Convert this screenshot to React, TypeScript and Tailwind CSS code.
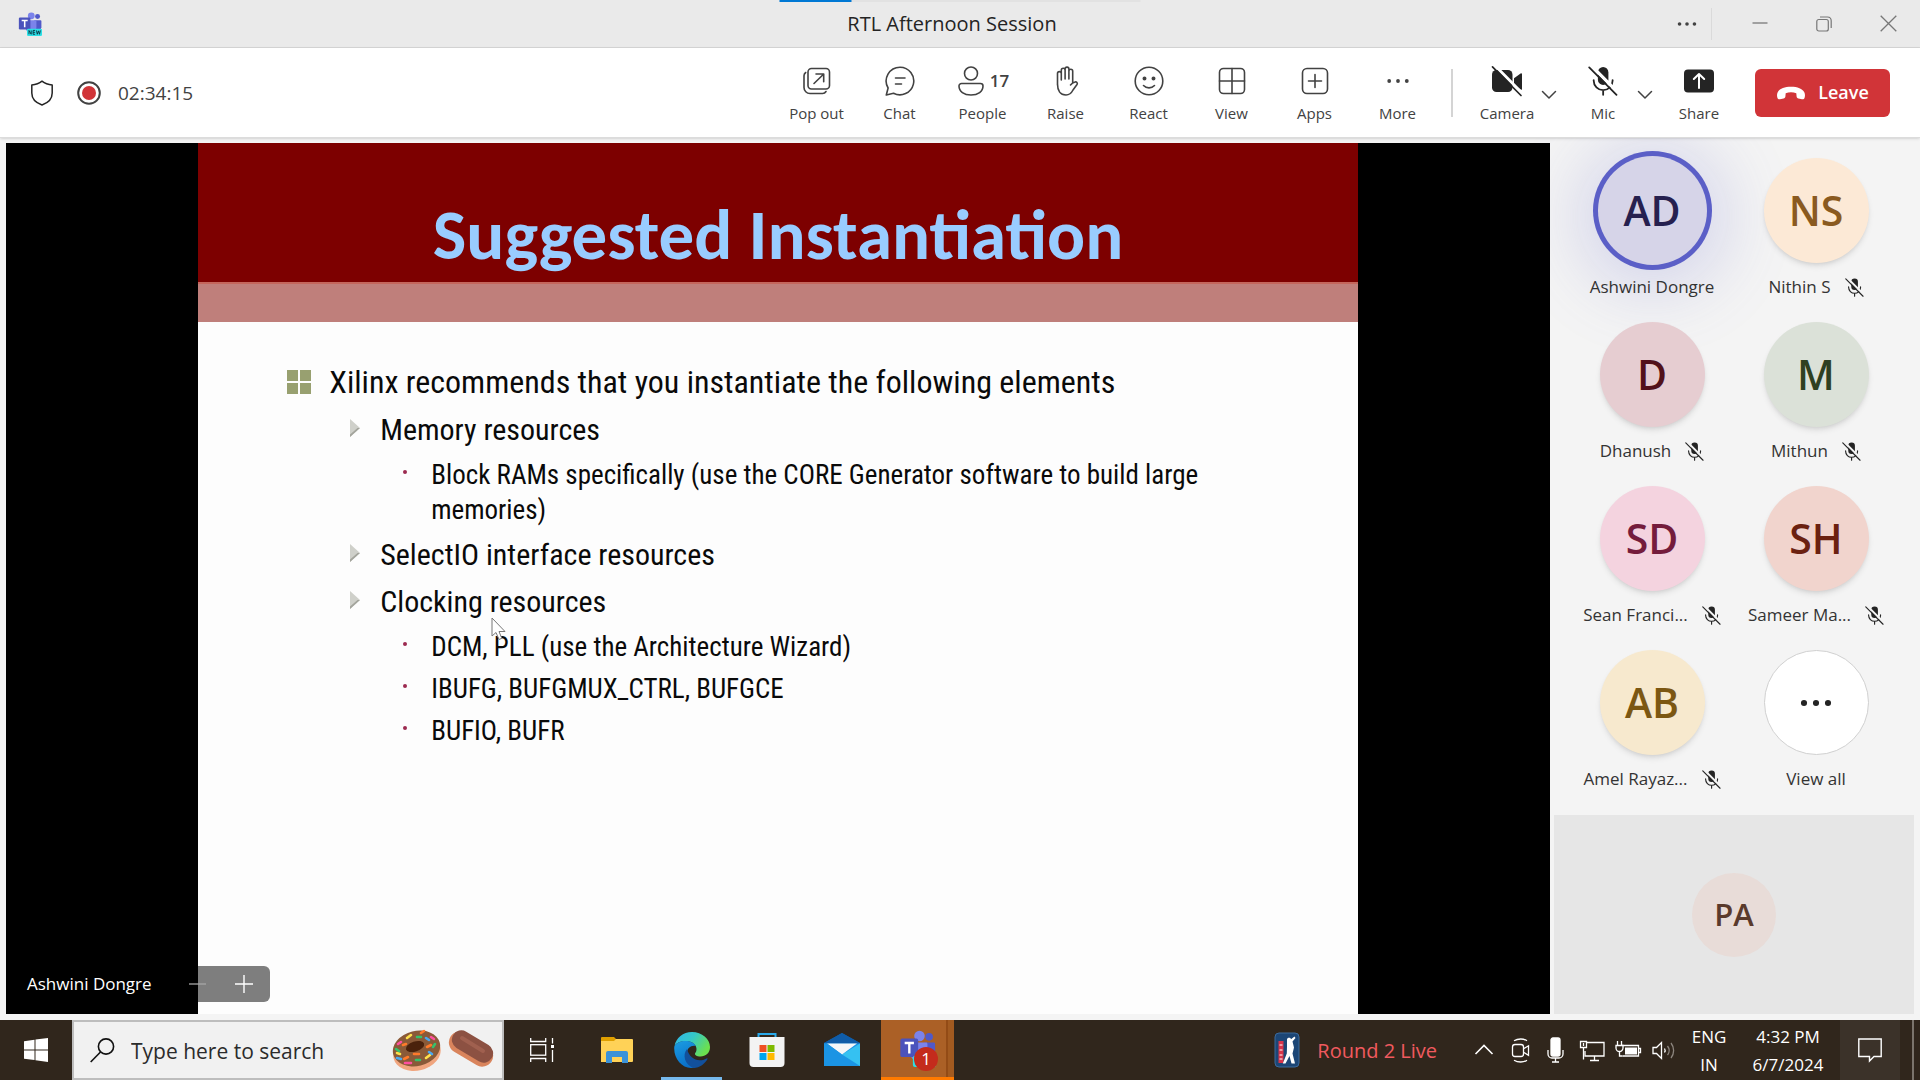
import type { ReactNode } from 'react';

const ink = '#424242';

function Stroke({ children, size = 30, w = 1.6 }: { children: ReactNode; size?: number; w?: number }) {
  return (
    <svg
      width={size}
      height={size}
      viewBox="0 0 30 30"
      fill="none"
      stroke={ink}
      strokeWidth={w}
      strokeLinecap="round"
      strokeLinejoin="round"
      aria-hidden="true"
    >
      {children}
    </svg>
  );
}

function Dots({ size = 30, r = 2, gap = 8.5, color = ink }: { size?: number; r?: number; gap?: number; color?: string }) {
  return (
    <svg width={size} height={size} viewBox="0 0 30 30" fill={color} aria-hidden="true">
      <circle cx={15 - gap} cy="15" r={r} />
      <circle cx="15" cy="15" r={r} />
      <circle cx={15 + gap} cy="15" r={r} />
    </svg>
  );
}

function MicOff({ size, bg }: { size: number; bg: string }) {
  return (
    <svg width={size} height={size} viewBox="0 0 20 20" fill="none" strokeLinecap="round" aria-hidden="true">
      <rect x="6.6" y="0.6" width="7" height="12" rx="3.5" fill="#242424" />
      <path d="M3.8 9.4v.4a6.3 6.3 0 0 0 12.6 0v-.4M10.1 16.2v3" stroke="#242424" strokeWidth="1.2" />
      <path d="M2 -.4 20.5 18.2" stroke={bg} strokeWidth="2.2" />
      <path d="M.8 .9 19 19.2" stroke="#242424" strokeWidth="1.2" />
    </svg>
  );
}

function CameraOff() {
  return (
    <svg width="32" height="32" viewBox="0 0 32 32" fill="none" strokeLinecap="round" aria-hidden="true">
      <rect x="1" y="5" width="20.500" height="22" rx="4.500" fill="#242424" />
      <path d="M23 13.200 29.600 8.400c.7-.5 1.400-.1 1.400.7v14.800c0 .8-.7 1.200-1.400.7L23 19.800z" fill="#242424" />
      <path d="M3.500 0 32.500 29.500" stroke="#fff" strokeWidth="2.800" />
      <path d="M1.500 1.800 30 30.500" stroke="#242424" strokeWidth="1.700" />
    </svg>
  );
}

function ChevronDown() {
  return (
    <svg width="16" height="10" viewBox="0 0 16 10" fill="none" stroke={ink} strokeWidth="1.500" strokeLinecap="round" strokeLinejoin="round" aria-hidden="true">
      <path d="M1.500 1.500 8 8l6.500-6.500" />
    </svg>
  );
}

function TeamsLogo({ size, badge = true }: { size: number; badge?: boolean }) {
  return (
    <svg width={size} height={size} viewBox="0 0 28 28" aria-hidden="true">
      <circle cx="15.500" cy="4.500" r="4" fill="#7b83eb" />
      <circle cx="22.800" cy="5.200" r="2.900" fill="#5059c9" />
      <path d="M19 9.500h7.300c.6 0 1 .5 1 1v7.200a4.800 4.800 0 0 1-8.300 3z" fill="#5059c9" />
      <path d="M9 9.500h11.500c.6 0 1 .5 1 1V18a6.500 6.500 0 0 1-12.800 1z" fill="#7b83eb" />
      <rect x="1" y="6.500" width="13.500" height="14" rx="1.400" fill="#4b53bc" />
      <path d="M4.300 9.800h7M7.800 9.800v8" stroke="#fff" strokeWidth="1.800" />
      {badge && (
        <>
          <rect x="10.500" y="19.500" width="17.500" height="8.500" rx="1.600" fill="#2be0e6" />
          <path d="M12.800 26v-4.500l2.600 4.500v-4.500M20 21.500h-2.400V26H20M17.600 23.700H20M21.500 21.500l1 4.500 1.300-4 1.300 4 1-4.500" stroke="#0b2a3a" strokeWidth="1" fill="none" />
        </>
      )}
    </svg>
  );
}

const tools: { label: string; icon: ReactNode; count?: string }[] = [
  {
    label: 'Pop out',
    icon: (
      <Stroke>
        <rect x="6" y="2.500" width="21.500" height="20.500" rx="3.500" />
        <path d="M3.700 6.500A4 4 0 0 0 2 9.800v11.700a6 6 0 0 0 6 6h12.500a4 4 0 0 0 3.500-2M12 17.500l9.500-9.300M14 8h7.700v7.700" />
      </Stroke>
    ),
  },
  {
    label: 'Chat',
    icon: (
      <Stroke>
        <path d="M15 1.200a13.800 13.800 0 1 1-6.500 26L1.300 29l1.800-7A13.800 13.800 0 0 1 15 1.200zM10.500 12h9.500M10.500 18h6" />
      </Stroke>
    ),
  },
  {
    label: 'People',
    count: '17',
    icon: (
      <Stroke>
        <circle cx="15" cy="7.500" r="6.500" />
        <path d="M5.500 17.500h19a2.500 2.500 0 0 1 2.500 2.500c0 5.500-5 9-12 9s-12-3.500-12-9a2.500 2.500 0 0 1 2.500-2.500z" />
      </Stroke>
    ),
  },
  {
    label: 'Raise',
    icon: (
      <Stroke>
        <path d="M6.500 19V7.500a1.900 1.900 0 0 1 3.800 0V14M10.300 13V4.200a1.900 1.900 0 0 1 3.800 0V13M14.100 12V3a1.900 1.900 0 0 1 3.800 0v10M17.900 13V5.200a1.900 1.900 0 0 1 3.800 0V17M6.500 18c0 6 2.500 11 8.500 11 3.500 0 5.500-2 7-5l4-5.500c1-1.500-.5-3-2-2.500-1.300.4-2.800 1-4.500 3" />
      </Stroke>
    ),
  },
  {
    label: 'React',
    icon: (
      <Stroke>
        <circle cx="15" cy="15" r="13.800" />
        <circle cx="10.500" cy="12.500" r="1.200" fill={ink} />
        <circle cx="19.500" cy="12.500" r="1.200" fill={ink} />
        <path d="M9.500 19.500a7.500 7.500 0 0 0 11 0" />
      </Stroke>
    ),
  },
  {
    label: 'View',
    icon: (
      <Stroke>
        <rect x="2.500" y="2.500" width="25" height="25" rx="4" />
        <path d="M15 2.500v25M2.500 15h25" />
      </Stroke>
    ),
  },
  {
    label: 'Apps',
    icon: (
      <Stroke>
        <rect x="2.500" y="2.500" width="25" height="25" rx="4.500" />
        <path d="M15 8.500v13M8.500 15h13" />
      </Stroke>
    ),
  },
  { label: 'More', icon: <Dots r={1.9} gap={8.8} /> },
];

function TitleBar() {
  return (
    <header className="relative grid h-12 grid-cols-[1fr_auto_1fr] items-center border-b border-[#d6d6d6] bg-[#eaeaea]">
      <div className="absolute top-0 left-1/2 h-0.5 w-[361px] -translate-x-1/2 bg-[#e2e2e2]">
        <div className="h-full w-1/5 bg-[#0078d4]" />
      </div>
      <div className="pl-[18px]">
        <TeamsLogo size={24} />
      </div>
      <h1 className="pr-4 text-[20px] leading-6 text-[#242424]">RTL Afternoon Session</h1>
      <div className="flex items-center justify-end">
        <button aria-label="Options" className="flex w-12 justify-center">
          <Dots size={26} r={2.1} gap={8.6} />
        </button>
        <div className="mr-4 h-8 w-px bg-[#dadada]" />
        <button aria-label="Minimise" className="flex w-16 justify-center">
          <svg width="16" height="16" viewBox="0 0 16 16" stroke="#777" strokeWidth="1.300">
            <path d="M.5 7H15.500" />
          </svg>
        </button>
        <button aria-label="Restore" className="flex w-16 justify-center">
          <svg width="16" height="16" viewBox="0 0 16 16" fill="none" stroke="#777" strokeWidth="1.200">
            <rect x=".8" y="3.500" width="11.500" height="11.500" rx="2" />
            <path d="M4 1h7.500A3.800 3.800 0 0 1 15.200 4.700V12" />
          </svg>
        </button>
        <button aria-label="Close" className="flex w-16 justify-center">
          <svg width="17" height="17" viewBox="0 0 17 17" stroke="#777" strokeWidth="1.300">
            <path d="M.7.7l15.600 15.600M16.300.7.700 16.300" />
          </svg>
        </button>
      </div>
    </header>
  );
}

function ToolLabel({ children }: { children: ReactNode }) {
  return <span className="text-[15px] leading-5">{children}</span>;
}

function Toolbar() {
  return (
    <div className="relative z-10 flex h-[90px] items-center justify-between border-b border-[#dcdcdc] bg-white px-[30px] text-[#424242] shadow-sm">
      <div className="flex items-center">
        <svg width="24" height="26" viewBox="0 0 24 26" fill="none" stroke="#242424" strokeWidth="1.500" strokeLinejoin="round" role="img" aria-label="Encrypted">
          <path d="M12 1.200c2.800 2.300 6 3.500 10.200 3.800v8c0 5.600-3.400 9.600-10.200 12C5.200 22.600 1.800 18.600 1.800 13V5C6 4.700 9.200 3.500 12 1.200z" />
        </svg>
        <svg className="ml-[23px]" width="24" height="24" viewBox="0 0 24 24" role="img" aria-label="Recording">
          <circle cx="12" cy="12" r="10.800" fill="#fff" stroke="#424242" strokeWidth="2" />
          <circle cx="12" cy="12" r="7" fill="#d13438" />
        </svg>
        <time className="ml-[17px] text-[19px] leading-6">02:34:15</time>
      </div>
      <div className="flex items-center">
        {tools.map((t) => (
          <button key={t.label} className="flex w-[83px] flex-col items-center gap-1.5 pt-0.5">
            <span className="flex h-8 items-center gap-1">
              {t.icon}
              {t.count && <span className="text-[17px] leading-5 font-semibold">{t.count}</span>}
            </span>
            <ToolLabel>{t.label}</ToolLabel>
          </button>
        ))}
        <div className="mr-6 ml-3 h-12 w-0.5 bg-[#d4d4d4]" />
        <button className="flex w-[60px] flex-col items-center gap-1.5 pt-0.5">
          <CameraOff />
          <ToolLabel>Camera</ToolLabel>
        </button>
        <button aria-label="Camera options" className="flex w-6 justify-center pt-1">
          <ChevronDown />
        </button>
        <button className="ml-3 flex w-[60px] flex-col items-center gap-1.5 pt-0.5">
          <span className="flex h-8 items-center">
            <MicOff size={30} bg="#fff" />
          </span>
          <ToolLabel>Mic</ToolLabel>
        </button>
        <button aria-label="Mic options" className="flex w-6 justify-center pt-1">
          <ChevronDown />
        </button>
        <button className="flex w-[84px] flex-col items-center gap-1.5 pt-0.5">
          <svg width="32" height="32" viewBox="0 0 32 32" fill="none" aria-hidden="true">
            <rect x="1" y="4.500" width="30" height="23" rx="4" fill="#242424" />
            <path d="M16 23V9.500M10.800 14 16 9l5.200 5" stroke="#fff" strokeWidth="2" strokeLinecap="round" strokeLinejoin="round" />
          </svg>
          <ToolLabel>Share</ToolLabel>
        </button>
        <button className="ml-3.5 flex h-12 w-[135px] items-center justify-center gap-3 rounded-md bg-[#d13438] text-[18px] font-semibold text-white">
          <svg width="30" height="14" viewBox="0 0 30 14" fill="#fff" aria-hidden="true">
            <path d="M15 .7c6.500 0 11.500 2 13.300 5.500.9 1.800.8 3.800.3 5.500-.4 1.200-1.400 1.800-2.600 1.500l-3.600-.8c-1-.2-1.700-1-1.800-2l-.3-3.200C18.600 6.600 16.900 6.300 15 6.300s-3.600.3-5.300.9L9.400 10.400c-.1 1-.8 1.800-1.800 2l-3.600.8c-1.200.3-2.200-.3-2.600-1.500-.5-1.700-.6-3.700.3-5.500C3.500 2.700 8.500.7 15 .7z" />
          </svg>
          Leave
        </button>
      </div>
    </div>
  );
}

function ArrowItem({ children }: { children: ReactNode }) {
  return (
    <div className="flex text-[30px] leading-10">
      <svg className="mt-2 mr-5 shrink-0" width="10" height="20" viewBox="0 0 10 20" aria-hidden="true">
        <path d="M0 1 10 10 0 19z" fill="#cfd0ca" />
        <path d="M10 10 0 19v-2.500L7.500 10z" fill="#a3a49c" />
      </svg>
      <p>{children}</p>
    </div>
  );
}

function DotItem({ children }: { children: ReactNode }) {
  return (
    <li className="flex text-[27px] leading-[35px]">
      <span className="mt-3 mr-6 ml-px size-1 shrink-0 rounded-full bg-[#9c2a50]" />
      <p>{children}</p>
    </li>
  );
}

function Stage() {
  return (
    <section aria-label="Shared screen" className="relative z-10 flex flex-1 flex-col bg-black">
      <article className="mx-auto flex w-[75.1%] flex-1 flex-col bg-[#fdfdfd] text-[#0a0a0a]">
        <div className="flex h-[139px] justify-center bg-[#7d0000] pt-[52px]">
          <h2 className="font-[Carlito,Lato,sans-serif] text-[71px] leading-20 font-bold text-[#99ccff]">Suggested Instantiation</h2>
        </div>
        <div className="h-10 border-t-2 border-[#c4665c] bg-[#bf7f7b]" />
        <div className="pt-10 pr-20 pl-[89px] font-['Roboto_Condensed','Liberation_Sans',sans-serif]">
          <div className="flex items-center text-[32px] leading-10">
            <svg className="mr-[18px] shrink-0" width="24" height="24" viewBox="0 0 24 24" fill="#98a070" aria-hidden="true">
              <path d="M0 0h11v11H0zM13 0h11v11H13zM0 13h11v11H0zM13 13h11v11H13z" />
            </svg>
            <p>Xilinx recommends that you instantiate the following elements</p>
          </div>
          <ul className="mt-2 space-y-[7px] pl-[63px]">
            <li>
              <ArrowItem>Memory resources</ArrowItem>
              <ul className="mt-2 pl-[52px]">
                <DotItem>Block RAMs specifically (use the CORE Generator software to build large memories)</DotItem>
              </ul>
            </li>
            <li>
              <ArrowItem>SelectIO interface resources</ArrowItem>
            </li>
            <li className="relative">
              <ArrowItem>Clocking resources</ArrowItem>
              <svg className="absolute top-[35px] left-[141px]" width="16" height="24" viewBox="0 0 16 24" aria-hidden="true">
                <path d="M1 1v18l4-3.500L8 22.500l2.800-1.200L8 14.500h6z" fill="#fff" stroke="#777" strokeWidth="1" />
              </svg>
              <ul className="mt-2 space-y-[7px] pl-[52px]">
                <DotItem>DCM, PLL (use the Architecture Wizard)</DotItem>
                <DotItem>IBUFG, BUFGMUX_CTRL, BUFGCE</DotItem>
                <DotItem>BUFIO, BUFR</DotItem>
              </ul>
            </li>
          </ul>
        </div>
      </article>
      <div className="absolute bottom-3 left-0 flex h-9 w-[264px] items-center justify-between rounded-r-md bg-black/50 pr-[17px] pl-[21px] text-white">
        <span className="text-[17px] leading-6">Ashwini Dongre</span>
        <span className="flex gap-[29px]">
          <button aria-label="Zoom out">
            <svg width="17" height="18" viewBox="0 0 17 18" stroke="#a8a8a8" strokeWidth="1.300">
              <path d="M0 9h17" />
            </svg>
          </button>
          <button aria-label="Zoom in">
            <svg width="18" height="18" viewBox="0 0 18 18" stroke="#fff" strokeWidth="1.400">
              <path d="M0 9h18M9 0v18" />
            </svg>
          </button>
        </span>
      </div>
    </section>
  );
}

const people = [
  { initials: 'AD', name: 'Ashwini Dongre', tone: 'bg-[#d6d4e8] text-[#26204f] shadow-[0_0_0_2px_#d6d4e8,0_0_0_7px_#5b5fc7,0_6px_70px_20px_rgba(91,95,199,0.22)]', muted: false },
  { initials: 'NS', name: 'Nithin S', tone: 'bg-[#fce9d6] text-[#8a5a20] shadow-md', muted: true },
  { initials: 'D', name: 'Dhanush', tone: 'bg-[#e6cdd1] text-[#52111a] shadow-md', muted: true },
  { initials: 'M', name: 'Mithun', tone: 'bg-[#dbe1d8] text-[#2f4021] shadow-md', muted: true },
  { initials: 'SD', name: 'Sean Franci...', tone: 'bg-[#f4d3df] text-[#741c3c] shadow-md', muted: true },
  { initials: 'SH', name: 'Sameer Ma...', tone: 'bg-[#f1d4cd] text-[#6b2110] shadow-md', muted: true },
  { initials: 'AB', name: 'Amel Rayaz...', tone: 'bg-[#f7e9ce] text-[#7c5712] shadow-md', muted: true },
];

function Roster() {
  return (
    <aside aria-label="Participants" className="flex w-[360px] shrink-0 flex-col justify-between">
      <ul className="grid grid-cols-2 gap-y-[23px] px-4 pt-[15px]">
        {people.map((p) => (
          <li key={p.name} className="flex flex-col items-center gap-3">
            <div className={`flex size-[105px] items-center justify-center rounded-full text-[41px] font-semibold ${p.tone}`}>{p.initials}</div>
            <div className="flex items-center gap-3.5 text-[17px] leading-6 whitespace-nowrap text-[#333]">
              {p.name}
              {p.muted && <MicOff size={19} bg="#f4f4f4" />}
            </div>
          </li>
        ))}
        <li>
          <button className="flex w-full flex-col items-center gap-3">
            <span className="flex size-[105px] items-center justify-center rounded-full border border-[#d0d0d0] bg-white">
              <Dots size={40} r={2.3} gap={9} color="#242424" />
            </span>
            <span className="text-[17px] leading-6 text-[#333]">View all</span>
          </button>
        </li>
      </ul>
      <div className="flex h-[199px] items-center justify-center bg-[#e6e6e6]">
        <div className="flex size-21 items-center justify-center rounded-full bg-[#e8dcd8] text-[31px] font-semibold text-[#5a3a2c]">PA</div>
      </div>
    </aside>
  );
}

function SearchArt() {
  return (
    <svg className="shrink-0" width="104" height="44" viewBox="0 0 104 44" fill="none" aria-hidden="true">
      <ellipse cx="25" cy="25" rx="24" ry="17.500" fill="#f0a57e" transform="rotate(-14 25 25)" />
      <ellipse cx="24.500" cy="20.500" rx="24" ry="17.500" fill="#8a5a38" transform="rotate(-14 24.500 20.500)" />
      <ellipse cx="23" cy="18.500" rx="9.500" ry="5" fill="#4a220c" transform="rotate(-18 23 18.500)" />
      <g strokeWidth="2.600" strokeLinecap="round">
        <path d="M15 10l4-3M34 30l4-3M5 25l3 1" stroke="#ffe14a" />
        <path d="M6 16l3-2M13 35l6 0M39 9l3 2" stroke="#ff4fa0" />
        <path d="M25 9l4 0M41 19l2-3M4 21l3 2M24 32l4 0" stroke="#35c26b" />
        <path d="M5 30l4 1M34 10l3 2M37 24l3 2" stroke="#4aa8f0" />
        <path d="M11 17l3-1M29 5l3-2M35 19l4-2M22 26l5 0M12 31l4-2" stroke="#ff7a2a" />
      </g>
      <rect x="55" y="10" width="48" height="22" rx="11" fill="#d9845c" transform="rotate(31 79 21)" />
      <rect x="58" y="9" width="45" height="19" rx="9.500" fill="#8c5142" transform="rotate(31 80.500 18.500)" />
      <path d="M70 10l21 13" stroke="#a0604f" strokeWidth="4" strokeLinecap="round" />
    </svg>
  );
}

const apps = [
  {
    name: 'Task View',
    icon: (
      <svg width="24" height="24" viewBox="0 0 24 24" fill="none" stroke="#fff" strokeWidth="1.300">
        <path d="M.7 0v3.500h15V0M.7 24v-3.500h15V24M22.500 0v5.500M22.500 12v12" />
        <rect x=".7" y="6.700" width="15" height="10.500" />
        <path d="M21 7h3v3h-3z" fill="#fff" stroke="none" />
      </svg>
    ),
  },
  {
    name: 'File Explorer',
    icon: (
      <svg width="32" height="28" viewBox="0 0 32 28">
        <path d="M0 2a1 1 0 0 1 1-1h12l2 2v5H0z" fill="#e0a000" />
        <path d="M0 5h13l2-2h16a1 1 0 0 1 1 1v21a1 1 0 0 1-1 1H0z" fill="#ffd257" />
        <path d="M5 27V17a2 2 0 0 1 2-2h18a2 2 0 0 1 2 2v10h-6v-6H11v6z" fill="#3b92d8" />
      </svg>
    ),
  },
  {
    name: 'Edge',
    active: 'before:bg-[#76b9ed]',
    icon: (
      <svg width="36" height="36" viewBox="0 0 36 36">
        <defs>
          <linearGradient id="edge-top" x1="0" y1="0" x2="1" y2=".5">
            <stop offset="0" stopColor="#2fb4ea" />
            <stop offset=".5" stopColor="#35c8c8" />
            <stop offset="1" stopColor="#6be04f" />
          </linearGradient>
          <linearGradient id="edge-side" x1="0" y1="0" x2=".4" y2="1">
            <stop offset="0" stopColor="#1b9de2" />
            <stop offset="1" stopColor="#0a6fc8" />
          </linearGradient>
        </defs>
        <path d="M.5 14C2 6 9 0 18 0c10 0 18 7 18 15 0 6-4.500 9.500-9.500 9.500-4 0-6-1.500-5.500-3 .8-1.500 1.500-2 1.500-4.500 0-4-4-8-10.500-8S1.500 12 .5 14z" fill="url(#edge-top)" />
        <path d="M.3 14.500C2 11 6.500 9 11.500 9c5 0 9 2 10.500 5-5-1-9 2-9 7 0 7 6 12 12 12-3 2-5 3-8 3C7.500 36-.8 26 .3 14.500z" fill="url(#edge-side)" />
        <path d="M13 17c-5 6-2 16 6.500 19C26 36 31 31.500 33.500 27c.3-.7-.5-1-1-.6-8 4.500-17 .6-19.500-9.400z" fill="#12509c" />
      </svg>
    ),
  },
  {
    name: 'Microsoft Store',
    icon: (
      <svg width="36" height="36" viewBox="0 0 36 36">
        <path d="M9.500 7V2h17v5" fill="none" stroke="#29a9ea" strokeWidth="2" />
        <path d="M.5 5h35v26a4 4 0 0 1-4 4h-27a4 4 0 0 1-4-4z" fill="#f3f3f3" />
        <path d="M10.500 13h7v7h-7z" fill="#f05022" />
        <path d="M18.500 13h7v7h-7z" fill="#7fba00" />
        <path d="M10.500 21h7v7h-7z" fill="#00a4ef" />
        <path d="M18.500 21h7v7h-7z" fill="#ffb900" />
      </svg>
    ),
  },
  {
    name: 'Mail',
    icon: (
      <svg width="36" height="34" viewBox="0 0 36 34">
        <path d="M0 10 18 0l18 10v8H0z" fill="#0f5ca8" />
        <path d="M0 10.500V33h36V10.500z" fill="#1b94e4" />
        <path d="M36 10.500 18 21.500 36 33z" fill="#35c1f1" />
        <path d="M0 10h36L18 0z" fill="#0f5ca8" />
        <path d="M3 10.500h30L18 21.500z" fill="#f4f6f8" />
        <path d="M0 10.500h3l15 11-18 11.500z" fill="#1b94e4" />
      </svg>
    ),
  },
];

function Tray({ label, children }: { label: string; children: ReactNode }) {
  return (
    <button aria-label={label} className="flex h-full w-9 items-center justify-center">
      <svg width="28" height="28" viewBox="0 0 28 28" fill="none" stroke="#fff" strokeWidth="1.300">
        {children}
      </svg>
    </button>
  );
}

function Taskbar() {
  return (
    <footer className="flex h-[60px] bg-[#30261c] text-white">
      <button aria-label="Start" className="flex w-[72px] items-center justify-center">
        <svg width="24" height="24" viewBox="0 0 24 24" fill="#fff">
          <path d="M0 3.200 10.500 1.800V11.500H0zM11.500 1.600 24 0v11.500H11.500zM0 12.500h10.500v9.600L0 20.800zM11.500 12.500H24V24l-12.500-1.700z" />
        </svg>
      </button>
      <label className="flex w-[432px] items-center border-2 border-[#bdbdbd] bg-[#f1f1f1] pr-1.5 pl-4">
        <svg className="shrink-0" width="25" height="25" viewBox="0 0 25 25" fill="none" stroke="#111" strokeWidth="1.600" aria-hidden="true">
          <circle cx="16" cy="8.500" r="7.600" />
          <path d="M10.500 14 .7 24" />
        </svg>
        <input
          aria-label="Search"
          placeholder="Type here to search"
          className="ml-4 w-0 flex-1 bg-transparent pt-1 text-[21px] text-[#2b2b2b] outline-none placeholder:text-[#2b2b2b]"
        />
        <SearchArt />
      </label>
      {apps.map((a) => (
        <button
          key={a.name}
          aria-label={a.name}
          className={`relative flex w-[75px] items-center justify-center before:absolute before:bottom-0 before:h-[3px] before:w-[61px] ${a.active ?? ''}`}
        >
          {a.icon}
        </button>
      ))}
      <button aria-label="Microsoft Teams" className="relative ml-0.5 flex w-[73px] items-center justify-center border-b-[3px] border-[#ff7a00] bg-[#ab6026] shadow-[inset_-6px_0_0_#a25a20,inset_-8px_0_0_#934b16]">
        <TeamsLogo size={37} />
        <span className="absolute top-[27px] left-[33px] flex size-6 items-center justify-center rounded-full bg-[#c42b1c] text-[17px] leading-6">1</span>
      </button>
      <div className="ml-auto flex items-center">
        <button className="mr-[29px] flex items-center gap-[17px] text-[20px] text-[#f05a5f]">
          <svg width="26" height="36" viewBox="0 0 26 36" aria-hidden="true">
            <rect x="1" y="1" width="24" height="34" rx="4" fill="#1c4676" stroke="#3b6a9c" />
            <path d="M4.500 9h5v22h-5z" fill="#d8344a" />
            <path d="M5.500 13h3M5.500 18h3M5.500 23h3M5.500 27h3" stroke="#fff" strokeWidth="1" />
            <path d="M13 7.500c0-2 3.500-2.500 4-.3l3.500-2.700 1 1.500-3 3.500 1.500 6-1.500 6 2.500 10h-3.500L15.500 24l-4 7.500H8.800l4-10 .2-7z" fill="#fff" />
          </svg>
          <span className="pt-0.5">Round 2 Live</span>
        </button>
        <Tray label="Show hidden icons">
          <path d="M5.500 18 14 9.500l8.500 8.500" strokeWidth="1.600" />
        </Tray>
        <Tray label="Meet Now">
          <rect x="6.500" y="8.500" width="11" height="12" rx="2.500" />
          <path d="M17.500 12.800l5-3v9.500l-5-3M8 4.800c4-2.400 9.500-2.400 13 0M8 24.200c4 2.400 9.500 2.400 13 0" />
        </Tray>
        <Tray label="Microphone">
          <rect x="9" y="2" width="9" height="18" rx="2" fill="#fff" />
          <path d="M6 14v4a4 4 0 0 0 4 4h7a4 4 0 0 0 4-4v-4M13.500 22v4M10 26h7" />
        </Tray>
        <Tray label="Network">
          <path d="M9 6.500h17v13.500H7V15M16.500 20v4M12 24.500h9" />
          <path d="M2.500 5.500h6v6h-6zM5.500 11.500v12M5.500 7v3" />
        </Tray>
        <Tray label="Battery">
          <path d="M8 9.500h16.500V20H8.500M24.500 12.500h2v4h-2" />
          <path d="M11 11.500h12v7H11z" fill="#fff" stroke="none" />
          <path d="M3.500 5v4M7.500 5v4M2 9.500h7v2.500a3.500 3.500 0 0 1-7 0zM5.500 15.500V20H8.500" fill="#30261c" />
        </Tray>
        <Tray label="Volume">
          <path d="M3 11.500h3.500l5-5v16l-5-5H3zM14.500 12.500c1 1.500 1 2.500 0 4" />
          <path d="M17.500 10c2.300 3 2.300 6 0 9M21 7c3.500 4.500 3.500 10.500 0 15" stroke="#8d867f" />
        </Tray>
        <button className="w-[54px] pt-px text-center text-[17px] leading-7">
          ENG
          <br />
          IN
        </button>
        <button className="w-[104px] pt-px text-center text-[17px] leading-7 whitespace-nowrap">
          4:32 PM
          <br />
          6/7/2024
        </button>
        <button aria-label="Notifications" className="mr-3 flex h-full w-[60px] items-center justify-center bg-[#3b3229]">
          <svg width="24" height="26" viewBox="0 0 24 26" fill="none" stroke="#fff" strokeWidth="1.400">
            <path d="M.8 2h22.400v17.500H16L11.500 24v-4.500H.8z" />
          </svg>
        </button>
        <button aria-label="Show desktop" className="h-full w-2 border-l-2 border-[#7b746c]" />
      </div>
    </footer>
  );
}

export default function App() {
  return (
    <div className="flex min-h-screen flex-col bg-[#f4f4f4] font-['Open_Sans','Noto_Sans',sans-serif]">
      <TitleBar />
      <Toolbar />
      <main className="flex flex-1 gap-1 px-1.5 pt-[5px] pb-1.5">
        <Stage />
        <Roster />
      </main>
      <Taskbar />
    </div>
  );
}
